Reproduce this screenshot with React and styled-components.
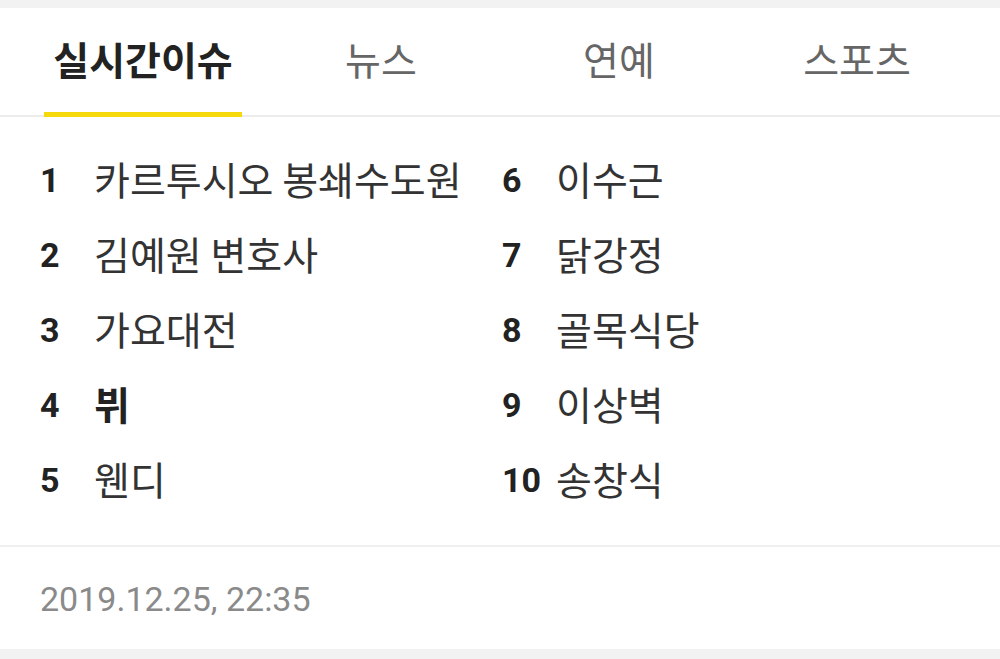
import React from "react";
import styled, { createGlobalStyle } from "styled-components";

const Global = createGlobalStyle`
  html, body { margin: 0; padding: 0; background: #f2f2f2; }
  body { font-family: Roboto, "Noto Sans CJK KR", sans-serif; }
  * { box-sizing: border-box; }
`;

const Page = styled.div`
  width: 1000px;
  height: 659px;
  background: #f2f2f2;
  padding-top: 8px;
  overflow: hidden;
`;

const Card = styled.div`
  background: #ffffff;
  height: 641px;
  display: flex;
  flex-direction: column;
`;

const TabBar = styled.nav`
  position: relative;
  display: grid;
  grid-template-columns: repeat(4, 1fr);
  padding: 0 24px;
  border-bottom: 2px solid #ececec;
`;

const Tab = styled.div`
  position: relative;
  height: 107px;
  display: flex;
  align-items: center;
  justify-content: center;
  font-family: "Noto Sans CJK KR", sans-serif;
  font-size: 39px;
  line-height: 1;
  font-weight: ${(p) => (p.$active ? 700 : 400)};
  color: ${(p) => (p.$active ? "#222222" : "#666666")};
  padding-bottom: 6px;
`;

const Underline = styled.span`
  position: absolute;
  left: 20px;
  right: 20px;
  bottom: -2px;
  height: 5px;
  background: #f5d90a;
`;

const List = styled.ol`
  list-style: none;
  margin: 0;
  padding: 25px 0 28px 40px;
  display: grid;
  grid-template-columns: 462px 1fr;
  grid-auto-flow: column;
  grid-template-rows: repeat(5, 75px);
  border-bottom: 2px solid #efefef;
`;

const Item = styled.li`
  display: flex;
  align-items: center;
`;

const Rank = styled.span`
  width: 54px;
  flex: none;
  font-family: Roboto, sans-serif;
  font-weight: 700;
  font-size: 34px;
  line-height: 1;
  color: #222222;
`;

const Keyword = styled.span`
  font-family: "Noto Sans CJK KR", sans-serif;
  font-size: 39px;
  line-height: 1;
  font-weight: ${(p) => (p.$bold ? 700 : 400)};
  color: ${(p) => (p.$bold ? "#222222" : "#333333")};
  white-space: nowrap;
  margin-top: -2px;
`;

const Footer = styled.div`
  height: 98px;
  display: flex;
  align-items: center;
  padding: 5px 0 0 40px;
  font-family: Roboto, sans-serif;
  font-size: 34px;
  color: #8a8a8a;
`;

const tabs = ["실시간이슈", "뉴스", "연예", "스포츠"];
const items = [
  { t: "카르투시오 봉쇄수도원" },
  { t: "김예원 변호사" },
  { t: "가요대전" },
  { t: "뷔", bold: true },
  { t: "웬디" },
  { t: "이수근" },
  { t: "닭강정" },
  { t: "골목식당" },
  { t: "이상벽" },
  { t: "송창식" },
];

export default function App() {
  return (
    <Page>
      <Global />
      <Card>
        <TabBar>
          {tabs.map((t, i) => (
            <Tab key={t} $active={i === 0}>
              {t}
              {i === 0 && <Underline />}
            </Tab>
          ))}
        </TabBar>
        <List>
          {items.map((it, i) => (
            <Item key={it.t}>
              <Rank>{i + 1}</Rank>
              <Keyword $bold={it.bold}>{it.t}</Keyword>
            </Item>
          ))}
        </List>
        <Footer>2019.12.25, 22:35</Footer>
      </Card>
    </Page>
  );
}
